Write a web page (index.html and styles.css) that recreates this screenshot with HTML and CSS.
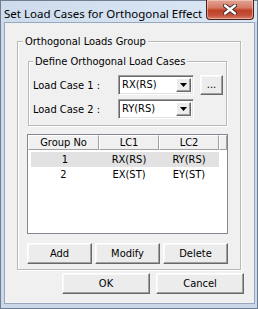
FILE: index.html
```html
<!DOCTYPE html>
<html>
<head>
<meta charset="utf-8">
<link rel="stylesheet" href="styles.css">
</head>
<body>
<div class="window">
  <div class="titlebar">
    <span class="title">Set Load Cases for Orthogonal Effect</span>
    <div class="close">
      <svg width="14" height="11" viewBox="0 0 14 11">
        <path d="M2 1.5 L12 9.5 M12 1.5 L2 9.5" stroke="#3b2a2a" stroke-width="4.2" stroke-linecap="round"/>
        <path d="M2 1.5 L12 9.5 M12 1.5 L2 9.5" stroke="#ffffff" stroke-width="2.4" stroke-linecap="round"/>
      </svg>
    </div>
  </div>
  <div class="client">
    <div class="group outer">
      <div class="glabel">Orthogonal Loads Group</div>
      <div class="group inner">
        <div class="glabel">Define Orthogonal Load Cases</div>
        <div class="row first">
          <span class="lbl">Load Case 1 :</span>
          <div class="combo"><span class="val">RX(RS)</span><span class="drop"><svg width="7" height="4" viewBox="0 0 7 4"><path d="M0 0 H7 L3.5 4 Z" fill="#000"/></svg></span></div>
          <button class="btn dots">...</button>
        </div>
        <div class="row">
          <span class="lbl">Load Case 2 :</span>
          <div class="combo"><span class="val">RY(RS)</span><span class="drop"><svg width="7" height="4" viewBox="0 0 7 4"><path d="M0 0 H7 L3.5 4 Z" fill="#000"/></svg></span></div>
        </div>
      </div>
      <div class="list">
        <div class="lhead">
          <span class="c1">Group No</span><span class="c2">LC1</span><span class="c3">LC2</span><span class="c4"></span>
        </div>
        <div class="lrow sel"><span class="c1">1</span><span class="c2">RX(RS)</span><span class="c3">RY(RS)</span></div>
        <div class="lrow"><span class="c1">2</span><span class="c2">EX(ST)</span><span class="c3">EY(ST)</span></div>
      </div>
      <div class="btnrow">
        <button class="btn small">Add</button>
        <button class="btn small">Modify</button>
        <button class="btn small">Delete</button>
      </div>
    </div>
    <div class="okrow">
      <button class="btn big">OK</button>
      <button class="btn big">Cancel</button>
    </div>
  </div>
</div>
</body>
</html>
```
FILE: styles.css
```css
html, body {
  margin: 0;
  padding: 0;
  background: #ffffff;
}
body {
  font-family: "DejaVu Sans Condensed", "DejaVu Sans", sans-serif;
  font-stretch: condensed;
  font-size: 11px;
  color: #000;
}
.window {
  width: 258px;
  height: 309px;
  box-sizing: border-box;
  background: #cad8ea;
  border: 1px solid #6f7f93;
  display: flex;
  flex-direction: column;
}
.titlebar {
  height: 21px;
  flex: none;
  display: flex;
  justify-content: space-between;
  align-items: flex-start;
  background: linear-gradient(90deg, #cddbec 0%, #d6e3f2 60%, #dbe6f3 100%);
}
.title {
  font-family: "Noto Sans", "Open Sans", sans-serif;
  font-stretch: normal;
  font-size: 11.5px;
  line-height: 16px;
  white-space: nowrap;
  padding: 5px 0 0 3px;
  color: #000;
}
.close {
  box-sizing: border-box;
  width: 48px;
  height: 20px;
  flex: none;
  margin: -1px 3px 0 0;
  border: 1px solid #4a2018;
  border-top: none;
  border-radius: 0 0 4px 4px;
  background: linear-gradient(#e3a595 0%, #d67a64 40%, #c04126 55%, #c4503a 80%, #d88069 100%);
  box-shadow: inset 0 0 0 1px rgba(255, 220, 210, 0.5);
  display: flex;
  align-items: center;
  justify-content: center;
}
.client {
  flex: 1;
  margin: 0 2px 4px 3px;
  border: 1px solid #97a8be;
  background: #f0f0f0;
}
.group {
  box-sizing: border-box;
  border: 1px solid #b9b9b9;
  box-shadow: inset 1px 1px 0 #ffffff, 1px 1px 0 #ffffff;
}
.glabel {
  width: fit-content;
  margin-top: -7px;
  padding: 0 2px;
  line-height: 13px;
  background: #f0f0f0;
  white-space: nowrap;
}
.outer {
  width: 224px;
  margin: 18px 0 0 12px;
  padding: 0 0 5px 9px;
}
.outer > .glabel {
  margin-left: -4px;
}
.inner {
  width: 199px;
  margin: 13px 0 0 1px;
  padding: 0 0 6px 4px;
}
.inner > .glabel {
  margin-left: 0;
}
.row {
  display: flex;
  align-items: center;
  height: 20px;
  margin-top: 4px;
}
.row.first {
  margin-top: 7px;
}
.lbl {
  width: 85px;
  flex: none;
  white-space: nowrap;
}
.combo {
  box-sizing: border-box;
  width: 76px;
  height: 20px;
  flex: none;
  display: flex;
  align-items: stretch;
  background: #fff;
  border: 1px solid;
  border-color: #a0a0a0 #ffffff #ffffff #a0a0a0;
  box-shadow: inset 1px 1px 0 #696969, inset -1px -1px 0 #e3e3e3;
  padding: 2px;
}
.val {
  flex: 1;
  line-height: 14px;
  padding-left: 1px;
}
.drop {
  box-sizing: border-box;
  width: 15px;
  background: #ececec;
  border: 1px solid;
  border-color: #ffffff #696969 #696969 #ffffff;
  box-shadow: inset -1px -1px 0 #a0a0a0;
  display: flex;
  align-items: center;
  justify-content: center;
}
.btn {
  box-sizing: border-box;
  font-family: inherit;
  font-stretch: condensed;
  font-size: 11px;
  color: #000;
  height: 21px;
  padding: 0;
  background: #ececec;
  border: 1px solid;
  border-color: #ffffff #696969 #696969 #ffffff;
  box-shadow: inset -1px -1px 0 #a0a0a0, inset 1px 1px 0 #f8f8f8;
}
.dots {
  width: 23px;
  height: 20px;
  flex: none;
  margin-left: 6px;
  line-height: 12px;
}
.list {
  box-sizing: border-box;
  width: 201px;
  height: 100px;
  margin-top: 8px;
  background: #fff;
  border: 1px solid #828790;
}
.lhead {
  display: flex;
  height: 15px;
  background: #f0f0f0;
}
.lhead span {
  box-sizing: border-box;
  height: 15px;
  line-height: 13px;
  text-align: center;
  border: 1px solid;
  border-color: #ffffff #a0a0a0 #a0a0a0 #ffffff;
}
.c1 { width: 71px; }
.c2 { width: 60px; }
.c3 { width: 60px; }
.c4 { width: 8px; }
.lrow {
  display: flex;
  height: 15px;
  line-height: 15px;
}
.lrow span {
  text-align: center;
}
.lrow.sel {
  margin-top: 2px;
  margin-left: 3px;
  width: 188px;
  background: #e2e2e2;
}
.lrow.sel .c1 { width: 68px; }
.btnrow {
  display: flex;
  gap: 3px;
  margin-top: 9px;
}
.small {
  width: 65px;
}
.okrow {
  display: flex;
  gap: 6px;
  margin: 3px 0 0 57px;
}
.big {
  width: 88px;
}
```
